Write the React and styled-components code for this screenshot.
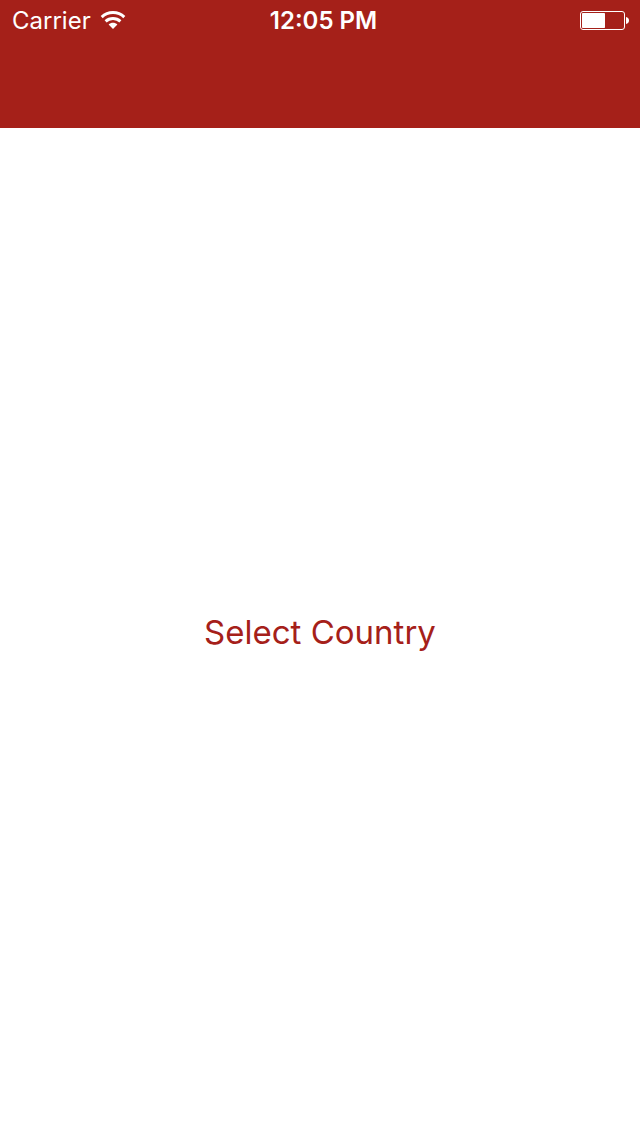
import React from 'react';
import styled, { createGlobalStyle } from 'styled-components';

const GlobalStyle = createGlobalStyle`
  *, *::before, *::after { box-sizing: border-box; }
  body {
    margin: 0;
    background: #ffffff;
    font-family: Inter, "Liberation Sans", sans-serif;
  }
`;

const Screen = styled.div`
  display: flex;
  flex-direction: column;
  min-height: 100vh;
`;

const Header = styled.header`
  background: #a52019;
  color: #ffffff;
`;

const StatusBar = styled.div`
  display: grid;
  grid-template-columns: 1fr auto 1fr;
  align-items: center;
  height: 42px;
  padding: 0 11px 0 12px;
  font-size: 24px;
  line-height: 42px;
`;

const Signal = styled.div`
  display: flex;
  align-items: center;
  gap: 9px;
`;

const Clock = styled.time`
  font-weight: 600;
  padding-left: 6px;
`;

const BatterySlot = styled.div`
  display: flex;
  justify-content: flex-end;
`;

const NavigationBar = styled.nav`
  height: 86px;
`;

const Content = styled.main`
  flex: 1;
  display: flex;
  align-items: center;
  justify-content: center;
`;

const TextButton = styled.button`
  border: 0;
  padding: 12px;
  background: transparent;
  color: #a52019;
  font-family: inherit;
  font-size: 33px;
  line-height: 40px;
  cursor: pointer;
`;

function WifiIcon() {
  return (
    <svg width="26" height="20" viewBox="0 0 26 20" role="img" aria-label="Wi-Fi">
      <g fill="none" stroke="#ffffff" strokeWidth="2.9">
        <path d="M1.7 6.1C8 0 18 0 24.3 6.1" />
        <path d="M5.6 10.4C9.7 6.5 16.3 6.5 20.4 10.4" />
      </g>
      <path d="M8.6 13.4C11 11.2 15 11.2 17.4 13.4L13 17.9Z" fill="#ffffff" />
    </svg>
  );
}

function BatteryIcon() {
  return (
    <svg width="49" height="20" viewBox="0 0 49 20" role="img" aria-label="Battery half full">
      <rect x=".5" y=".5" width="44" height="18" rx="2.5" fill="none" stroke="#ffffff" />
      <rect x="2" y="2" width="23" height="15" rx=".7" fill="#ffffff" />
      <path d="M46 6C48 6.5 49 7.7 49 9.5S48 12.5 46 13Z" fill="#ffffff" />
    </svg>
  );
}

export default function App() {
  return (
    <>
      <GlobalStyle />
      <Screen>
        <Header>
          <StatusBar>
            <Signal>
              <span>Carrier</span>
              <WifiIcon />
            </Signal>
            <Clock>12:05 PM</Clock>
            <BatterySlot>
              <BatteryIcon />
            </BatterySlot>
          </StatusBar>
          <NavigationBar aria-label="Main" />
        </Header>
        <Content>
          <TextButton type="button">Select Country</TextButton>
        </Content>
      </Screen>
    </>
  );
}
